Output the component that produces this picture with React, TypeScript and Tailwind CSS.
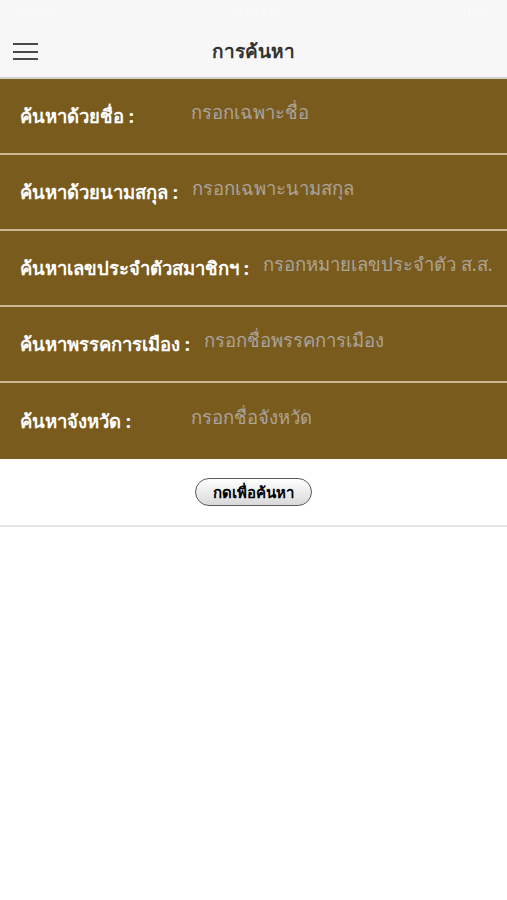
import React from 'react';

const FIELDS = [
  { label: 'ค้นหาด้วยชื่อ :', placeholder: 'กรอกเฉพาะชื่อ' },
  { label: 'ค้นหาด้วยนามสกุล :', placeholder: 'กรอกเฉพาะนามสกุล' },
  { label: 'ค้นหาเลขประจำตัวสมาชิกฯ :', placeholder: 'กรอกหมายเลขประจำตัว ส.ส.' },
  { label: 'ค้นหาพรรคการเมือง :', placeholder: 'กรอกชื่อพรรคการเมือง' },
  { label: 'ค้นหาจังหวัด :', placeholder: 'กรอกชื่อจังหวัด' },
];

export default function App() {
  return (
    <div className="min-h-[900px] bg-white font-['Noto_Sans','DejaVu_Sans',sans-serif]">
      {/* Nav bar */}
      <div className="bg-[#f7f7f7] border-b-2 border-[#cfcfcf]">
        <div className="h-[26px] flex items-center justify-between px-4 text-[12px] text-[#fbfbfb]">
          <span>Carrier</span>
          <span>3:00 PM</span>
          <span>100%</span>
        </div>
        <div className="h-[51px] flex items-center relative">
          <button className="absolute left-[13px] top-[17px] flex flex-col gap-[5.5px]">
            <span className="block w-[25px] h-[2px] bg-[#4a4a4a]" />
            <span className="block w-[25px] h-[2px] bg-[#4a4a4a]" />
            <span className="block w-[25px] h-[2px] bg-[#4a4a4a]" />
          </button>
          <h1 className="w-full text-center text-[19px] font-bold text-[#333333]">การค้นหา</h1>
        </div>
      </div>

      {/* Search fields */}
      <div className="bg-[#7a5b1e]">
        {FIELDS.map((f, i) => (
          <div
            key={i}
            className={`h-[76px] flex items-center pl-[20px] pr-1 ${i < FIELDS.length - 1 ? 'border-b-2 border-[#cdb894]' : ''}`}
          >
            <span className="min-w-[157px] text-white font-bold text-[18.5px] whitespace-nowrap">{f.label}</span>
            <input
              className="ml-[14px] flex-1 min-w-[150px] bg-transparent outline-none text-[18.5px] text-[#b0a9a0] placeholder:text-[#aaa49c] -mt-[9px]"
              placeholder={f.placeholder}
            />
          </div>
        ))}
      </div>

      {/* Submit */}
      <div className="h-[68px] flex items-center justify-center border-b-2 border-[#e6e6e6]">
        <button className="h-[28px] px-[17px] rounded-full border border-[#5a5a5a] bg-gradient-to-b from-white to-[#d9d9d9] text-[15px] font-bold text-black leading-none">
          กดเพื่อค้นหา
        </button>
      </div>
    </div>
  );
}
